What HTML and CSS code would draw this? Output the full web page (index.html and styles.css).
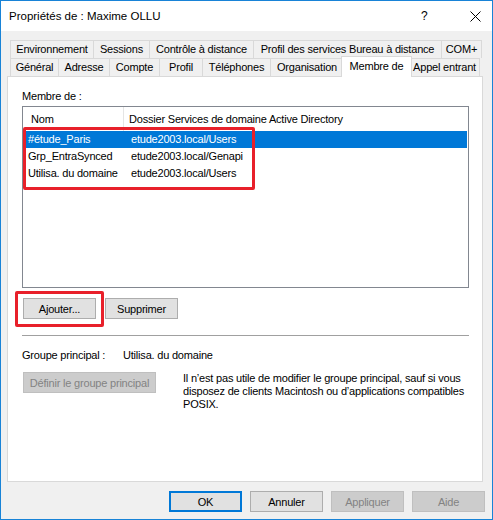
FILE: index.html
```html
<!DOCTYPE html>
<html lang="fr">
<head>
  <meta charset="UTF-8">
  <title>Propriétés de : Maxime OLLU</title>
  <link rel="stylesheet" href="styles.css">
</head>
<body>
  <div class="window">
    <!-- Title bar -->
    <div class="titlebar">
      <span class="title">Propriétés de : Maxime OLLU</span>
      <span class="help">?</span>
      <span class="close">
        <svg width="11" height="11" viewBox="0 0 11 11"><path d="M0.5 0.5 L10.5 10.5 M10.5 0.5 L0.5 10.5" stroke="#000" stroke-width="1" fill="none"/></svg>
      </span>
    </div>

    <div class="content">
      <!-- Tabs -->
      <div class="tabs">
        <div class="tab-row">
          <div class="tab w-env">Environnement</div>
          <div class="tab w-ses">Sessions</div>
          <div class="tab w-ctl">Contrôle à distance</div>
          <div class="tab w-prf">Profil des services Bureau à distance</div>
          <div class="tab w-com">COM+</div>
        </div>
        <div class="tab-row">
          <div class="tab w-gen">Général</div>
          <div class="tab w-adr">Adresse</div>
          <div class="tab w-cpt">Compte</div>
          <div class="tab w-pfl">Profil</div>
          <div class="tab w-tel">Téléphones</div>
          <div class="tab w-org">Organisation</div>
          <div class="tab w-mem active">Membre de</div>
          <div class="tab w-app">Appel entrant</div>
        </div>
      </div>

      <!-- Tab page -->
      <div class="panel">
        <div class="label">Membre de :</div>
        <div class="listview">
          <div class="lv-header">
            <div class="col-name">Nom</div>
            <div class="col-path">Dossier Services de domaine Active Directory</div>
          </div>
          <div class="lv-row selected">
            <div class="col-name">#étude_Paris</div>
            <div class="col-path">etude2003.local/Users</div>
          </div>
          <div class="lv-row">
            <div class="col-name">Grp_EntraSynced</div>
            <div class="col-path">etude2003.local/Genapi</div>
          </div>
          <div class="lv-row">
            <div class="col-name">Utilisa. du domaine</div>
            <div class="col-path">etude2003.local/Users</div>
          </div>
        </div>

        <div class="btn-row">
          <button class="btn">Ajouter...</button>
          <button class="btn">Supprimer</button>
        </div>

        <div class="separator"></div>

        <div class="primary">
          <span class="primary-label">Groupe principal :</span>
          <span>Utilisa. du domaine</span>
        </div>

        <div class="primary-set">
          <button class="btn btn-wide" disabled>Définir le groupe principal</button>
          <p class="note">Il n’est pas utile de modifier le groupe principal, sauf si vous disposez de clients Macintosh ou d’applications compatibles POSIX.</p>
        </div>
      </div>

      <!-- Dialog buttons -->
      <div class="footer">
        <button class="btn default">OK</button>
        <button class="btn">Annuler</button>
        <button class="btn" disabled>Appliquer</button>
        <button class="btn" disabled>Aide</button>
      </div>
    </div>

    <!-- Red highlight annotations -->
    <div class="mark mark-list"></div>
    <div class="mark mark-add"></div>
  </div>
</body>
</html>
```

FILE: styles.css
```css
* {
  box-sizing: border-box;
}

body {
  margin: 0;
  background: #ffffff;
  font-family: "Liberation Sans", Arial, sans-serif;
  font-size: 11px;
  letter-spacing: -0.2px;
  color: #000000;
}

.window {
  position: relative;
  width: 493px;
  height: 520px;
  border: 1px solid #1883d7;
  display: flex;
  flex-direction: column;
}

.titlebar {
  height: 30px;
  background: #ffffff;
  display: flex;
  align-items: center;
  padding-left: 8px;
  font-size: 11.5px;
  letter-spacing: 0;
}

.title {
  flex: 1;
}

.help {
  width: 16px;
  margin-right: 33px;
  font-size: 12px;
}

.close {
  width: 22px;
  height: 11px;
  display: flex;
}

.content {
  flex: 1;
  background: #f0f0f0;
  padding: 9px 7px 0 6px;
  display: flex;
  flex-direction: column;
}

/* Tabs */
.tabs {
  display: flex;
  flex-direction: column;
  padding-left: 3px;
}

.tab-row {
  display: flex;
  height: 18px;
}

.tab {
  height: 18px;
  line-height: 17px;
  text-align: center;
  border: 1px solid #d9d9d9;
  border-right: none;
  border-bottom: none;
  background: #f0f0f0;
  white-space: nowrap;
}

.tab:last-child {
  border-right: 1px solid #d9d9d9;
}

.tab.active {
  position: relative;
  height: 21px;
  margin-top: -2px;
  margin-left: -2px;
  margin-right: -2px;
  line-height: 19px;
  background: #ffffff;
  border-right: 1px solid #d9d9d9;
  z-index: 2;
}

.tab.active + .tab {
  border-left: none;
}

.w-env { width: 83px; }
.w-ses { width: 56px; }
.w-ctl { width: 104px; }
.w-prf { width: 188px; }
.w-com { width: 41px; }

.w-gen { width: 48px; }
.w-adr { width: 51px; }
.w-cpt { width: 50px; }
.w-pfl { width: 43px; }
.w-tel { width: 68px; }
.w-org { width: 73px; }
.w-mem { width: 71px; }
.w-app { width: 70px; }

/* Tab page */
.panel {
  height: 406px;
  width: 476px;
  background: #ffffff;
  border: 1px solid #d9d9d9;
  padding: 12px 13px 0 14px;
}

.label {
  line-height: 15px;
  margin-bottom: 2px;
}

.listview {
  height: 182px;
  border: 1px solid #828790;
  background: #ffffff;
  padding-right: 1px;
}

.lv-header,
.lv-row {
  display: flex;
  white-space: nowrap;
}

.lv-header {
  height: 24px;
  line-height: 24px;
}

.lv-header .col-name {
  width: 101px;
  padding-left: 8px;
  border-right: 1px solid #e5e5e5;
}

.lv-header .col-path {
  padding-left: 5px;
}

.lv-row {
  height: 17px;
  line-height: 17px;
  margin-left: 1px;
}

.lv-row .col-name {
  width: 101px;
  padding-left: 4px;
}

.lv-row .col-path {
  padding-left: 6px;
}

.lv-row.selected {
  background: #0078d7;
  color: #ffffff;
}

/* Buttons */
.btn {
  height: 21px;
  width: 73px;
  padding: 0;
  background: #e1e1e1;
  border: 1px solid #adadad;
  font-family: inherit;
  font-size: 11px;
  letter-spacing: -0.2px;
  color: #000000;
}

.btn:disabled {
  background: #cccccc;
  border-color: #bfbfbf;
  color: #838383;
}

.btn.default {
  border: 2px solid #0078d7;
}

.btn-row {
  display: flex;
  gap: 9px;
  margin-top: 10px;
  padding-left: 1px;
}

.separator {
  height: 1px;
  background: #a0a0a0;
  margin-top: 16px;
}

.primary {
  display: flex;
  line-height: 14px;
  margin-top: 12px;
}

.primary-label {
  width: 101px;
}

.primary-set {
  display: flex;
  margin-top: 10px;
  padding-left: 1px;
}

.btn-wide {
  width: 133px;
  flex-shrink: 0;
}

.note {
  margin: 0 0 0 27px;
  line-height: 13px;
  width: 286px;
}

/* Dialog buttons */
.footer {
  display: flex;
  justify-content: flex-end;
  gap: 8px;
  margin-top: 9px;
}

/* Annotations */
.mark {
  position: absolute;
  border: 3px solid #e8202a;
  border-radius: 2px;
}

.mark-list {
  left: 22px;
  top: 126px;
  width: 232px;
  height: 63px;
}

.mark-add {
  left: 14px;
  top: 290px;
  width: 89px;
  height: 36px;
}
```
